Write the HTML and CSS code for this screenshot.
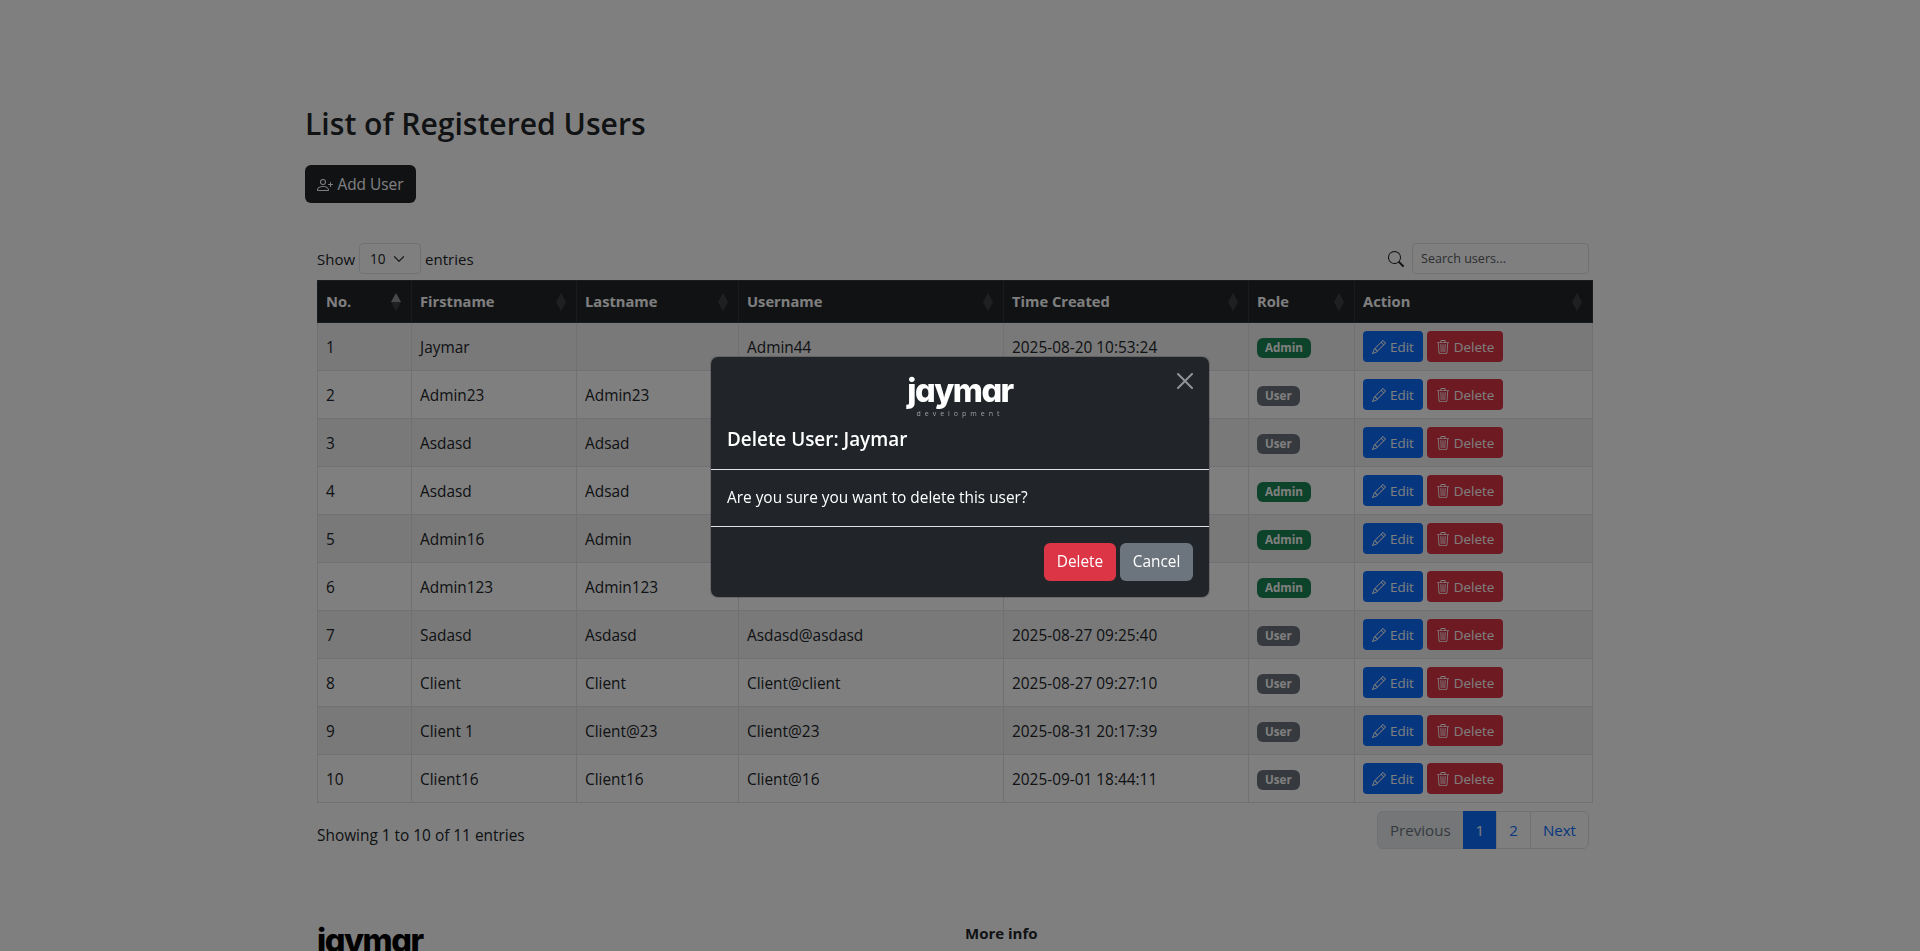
FILE: index.html
```html
<!DOCTYPE html>
<html lang="en">
<head>
    <meta charset="UTF-8">
    <meta name="viewport" content="width=device-width, initial-scale=1.0">
    <title>Registered Users</title>
    <link rel="stylesheet" href="styles.css">
</head>
<body>
    <main class="container">
        <h1 class="page-title">List of Registered Users</h1>
        <button class="btn btn-dark add-btn">
            <svg class="icon" viewBox="0 0 16 16"><path d="M6 8a3 3 0 1 0 0-6 3 3 0 0 0 0 6zm2-3a2 2 0 1 1-4 0 2 2 0 0 1 4 0zm4 8c0 1-1 1-1 1H1s-1 0-1-1 1-4 6-4 6 3 6 4zm-1-.004c-.001-.246-.154-.986-.832-1.664C9.516 10.68 8.289 10 6 10c-2.29 0-3.516.68-4.168 1.332-.678.678-.83 1.418-.832 1.664h10z"/><path d="M13.5 5a.5.5 0 0 1 .5.5V7h1.5a.5.5 0 0 1 0 1H14v1.5a.5.5 0 0 1-1 0V8h-1.5a.5.5 0 0 1 0-1H13V5.5a.5.5 0 0 1 .5-.5z"/></svg>
            Add User
        </button>

        <section class="table-wrap">
            <div class="table-top">
                <label class="length">Show
                    <span class="select">10
                        <svg viewBox="0 0 16 16"><path fill="none" stroke="#343a40" stroke-linecap="round" stroke-linejoin="round" stroke-width="1.6" d="m2 5 6 6 6-6"/></svg>
                    </span>
                    entries</label>
                <div class="search">
                    <svg class="search-icon" viewBox="0 0 16 16"><path d="M11.742 10.344a6.5 6.5 0 1 0-1.397 1.398h-.001c.03.04.062.078.098.115l3.85 3.85a1 1 0 0 0 1.415-1.414l-3.85-3.85a1.007 1.007 0 0 0-.115-.1zM12 6.5a5.5 5.5 0 1 1-11 0 5.5 5.5 0 0 1 11 0z"/></svg>
                    <span class="search-input">Search users...</span>
                </div>
            </div>

            <table class="users">
                <colgroup>
                    <col class="c-no"><col class="c-first"><col class="c-last"><col class="c-user"><col class="c-time"><col class="c-role"><col class="c-action">
                </colgroup>
                <thead>
                    <tr>
                        <th class="sorted">No.</th>
                        <th>Firstname</th>
                        <th>Lastname</th>
                        <th>Username</th>
                        <th>Time Created</th>
                        <th>Role</th>
                        <th>Action</th>
                    </tr>
                </thead>
                <tbody id="rows"></tbody>
            </table>

            <div class="table-bottom">
                <div class="info">Showing 1 to 10 of 11 entries</div>
                <ul class="pager">
                    <li class="disabled">Previous</li>
                    <li class="active">1</li>
                    <li>2</li>
                    <li>Next</li>
                </ul>
            </div>
        </section>

        <footer class="site-footer">
            <div class="footer-brand">jaymar</div>
            <h6 class="footer-head">More info</h6>
        </footer>
    </main>

    <div class="backdrop"></div>

    <div class="modal">
        <div class="modal-content">
            <div class="modal-header">
                <div class="logo">
                    <span class="logo-word">jaymar</span>
                    <span class="logo-sub">development</span>
                </div>
                <h5 class="modal-title">Delete User: Jaymar</h5>
                <svg class="close" viewBox="0 0 16 16"><path d="M.293.293a1 1 0 0 1 1.414 0L8 6.586 14.293.293a1 1 0 1 1 1.414 1.414L9.414 8l6.293 6.293a1 1 0 0 1-1.414 1.414L8 9.414l-6.293 6.293a1 1 0 0 1-1.414-1.414L6.586 8 .293 1.707a1 1 0 0 1 0-1.414z"/></svg>
            </div>
            <div class="modal-body">Are you sure you want to delete this user?</div>
            <div class="modal-footer">
                <button class="btn btn-danger">Delete</button>
                <button class="btn btn-secondary">Cancel</button>
            </div>
        </div>
    </div>

    <script src="app.js"></script>
</body>
</html>
```

FILE: styles.css
```css
* {
    box-sizing: border-box;
}

html, body {
    height: 100%;
}

body {
    margin: 0;
    background: #fff;
    color: #212529;
    font-family: 'Open Sans', 'Noto Sans', sans-serif;
    font-size: 15.4px;
    line-height: 24px;
    overflow: hidden;
}

.container {
    width: 1300px;
    margin-left: 305px;
    padding-top: 103px;
}

.page-title {
    margin: 0 0 20px;
    font-size: 30.1px;
    font-weight: 600;
    line-height: 42px;
}

.btn {
    display: inline-flex;
    align-items: center;
    justify-content: center;
    height: 38px;
    padding: 0 12px;
    border: 1px solid transparent;
    border-radius: 6px;
    color: #fff;
    font: inherit;
    white-space: nowrap;
}

.btn-dark { background: #212529; }
.btn-danger { background: #dc3545; }
.btn-secondary { background: #6c757d; }

.icon {
    width: 16px;
    height: 16px;
    margin-right: 4px;
    fill: currentColor;
}

.add-btn {
    display: flex;
    width: 111px;
    padding: 2px 0 0;
}

.table-wrap {
    width: 1272px;
    margin: 40px 0 0 12px;
}

.table-top {
    display: flex;
    justify-content: space-between;
    align-items: center;
    height: 31px;
    margin-bottom: 6px;
    font-size: 15px;
}

.length {
    display: flex;
    align-items: center;
    gap: 4px;
}

.select {
    display: flex;
    align-items: center;
    justify-content: space-between;
    width: 62px;
    height: 31px;
    padding: 0 15px 0 10px;
    border: 1px solid #dee2e6;
    border-radius: 4px;
    font-size: 13.6px;
}

.select svg {
    width: 12px;
    height: 12px;
}

.search {
    display: flex;
    align-items: center;
    gap: 8px;
}

.search-icon {
    width: 16px;
    height: 16px;
    fill: #212529;
}

.search-input {
    display: flex;
    align-items: center;
    width: 177px;
    height: 31px;
    padding: 0 8px;
    border: 1px solid #dee2e6;
    border-radius: 4px;
    color: #595c5f;
    font-size: 12.6px;
}

.users {
    width: 1275px;
    table-layout: fixed;
    border-collapse: collapse;
}

.c-no { width: 94px; }
.c-first { width: 165px; }
.c-last { width: 162px; }
.c-user { width: 265px; }
.c-time { width: 245px; }
.c-role { width: 106px; }
.c-action { width: 238px; }

.users th {
    position: relative;
    height: 42px;
    padding: 0 8px 1px;
    background: #212529;
    border: 1px solid #32383e;
    color: #fff;
    font-size: 14.7px;
    font-weight: 700;
    text-align: left;
}

/* sort arrows */
.users th::before,
.users th::after {
    content: "";
    position: absolute;
    right: 10px;
    width: 0;
    height: 0;
    border-left: 5.5px solid transparent;
    border-right: 5.5px solid transparent;
    opacity: 0.13;
}

.users th::before {
    top: 12px;
    border-bottom: 9px solid #fff;
}

.users th::after {
    top: 21px;
    border-top: 9px solid #fff;
}

.users th.sorted::before {
    opacity: 0.5;
}

.users td {
    height: 48px;
    padding: 2px 8px 0;
    border: 1px solid #dee2e6;
    vertical-align: middle;
}

.users tbody tr:nth-child(odd) td {
    background: #f2f2f2;
}

.badge {
    display: inline-block;
    padding: 0 8px;
    border-radius: 6px;
    color: #fff;
    font-size: 11.6px;
    font-weight: 700;
    line-height: 20px;
    vertical-align: middle;
}

.badge-admin { background: #198754; }
.badge-user { background: #6c757d; }

.actions {
    display: flex;
    gap: 4px;
    margin-top: -2px;
}

.btn-sm {
    height: 31px;
    padding: 0 8px;
    border-radius: 4px;
    font-size: 13.4px;
}

.btn-sm svg {
    width: 14px;
    height: 14px;
    margin-right: 4px;
    fill: currentColor;
}

.btn-edit { background: #0d6efd; }
.btn-delete { background: #dc3545; }

.table-bottom {
    display: flex;
    justify-content: space-between;
    height: 38px;
    margin-top: 8px;
}

.info {
    padding-top: 13px;
}

.pager {
    display: flex;
    margin: 0;
    padding: 0;
    list-style: none;
    font-size: 15.1px;
}

.pager li {
    display: flex;
    align-items: center;
    height: 38px;
    padding: 0 12px;
    margin-left: -1px;
    border: 1px solid #dee2e6;
    background: #fff;
    color: #0d6efd;
}

.pager li:first-child {
    border-radius: 6px 0 0 6px;
}

.pager li:last-child {
    border-radius: 0 6px 6px 0;
}

.pager .disabled {
    background: #e9ecef;
    color: #6c757d;
}

.pager .active {
    border-color: #0d6efd;
    background: #0d6efd;
    color: #fff;
}

.site-footer {
    display: flex;
    margin: 72px 0 0 12px;
}

.footer-brand {
    width: 648px;
    color: #000;
    font-family: Inter, sans-serif;
    font-size: 32.5px;
    font-weight: 800;
    font-feature-settings: "cv11";
    letter-spacing: -1.5px;
    line-height: 40px;
}

.footer-head {
    margin: 0;
    font-size: 15px;
    font-weight: 700;
}

.backdrop {
    position: fixed;
    inset: 0;
    background: rgba(0, 0, 0, 0.5);
}

.modal {
    position: fixed;
    inset: 0;
    display: flex;
    align-items: center;
    justify-content: center;
    padding-top: 2px;
}

.modal-content {
    width: 500px;
    border: 1px solid rgba(0, 0, 0, 0.175);
    border-radius: 8px;
    background: #212529;
    background-clip: padding-box;
    color: #fff;
}

.modal-header {
    position: relative;
    height: 113px;
    padding: 16px;
    border-bottom: 1px solid #dee2e6;
}

.logo {
    display: flex;
    flex-direction: column;
    align-items: center;
    height: 53px;
}

.logo-word {
    font-family: Inter, sans-serif;
    font-size: 32.5px;
    font-weight: 800;
    font-feature-settings: "cv11";
    letter-spacing: -1.5px;
    line-height: 36px;
}

.logo-sub {
    margin-top: 1px;
    color: #a0a2a4;
    font-size: 7px;
    letter-spacing: 4px;
    line-height: 8px;
}

.modal-title {
    margin: 0;
    font-size: 18.9px;
    font-weight: 600;
    line-height: 26px;
}

.close {
    position: absolute;
    top: 16px;
    right: 16px;
    width: 16px;
    height: 16px;
    fill: #fff;
    opacity: 0.5;
}

.modal-body {
    padding: 16px;
    border-bottom: 1px solid #dee2e6;
}

.modal-footer {
    display: flex;
    justify-content: flex-end;
    gap: 4px;
    padding: 16px;
}

.modal-footer .btn {
    width: 72px;
    padding: 0;
}

.modal-footer .btn-secondary {
    width: 73px;
}
```

FILE: app.js
```js
// username/time for rows 2-6 sit behind the dialog
const users = [
    ['Jaymar', '', 'Admin44', '2025-08-20 10:53:24', 'Admin'],
    ['Admin23', 'Admin23', '', '', 'User'],
    ['Asdasd', 'Adsad', '', '', 'User'],
    ['Asdasd', 'Adsad', '', '', 'Admin'],
    ['Admin16', 'Admin', '', '', 'Admin'],
    ['Admin123', 'Admin123', '', '', 'Admin'],
    ['Sadasd', 'Asdasd', 'Asdasd@asdasd', '2025-08-27 09:25:40', 'User'],
    ['Client', 'Client', 'Client@client', '2025-08-27 09:27:10', 'User'],
    ['Client 1', 'Client@23', 'Client@23', '2025-08-31 20:17:39', 'User'],
    ['Client16', 'Client16', 'Client@16', '2025-09-01 18:44:11', 'User']
];

const pencil = '<svg viewBox="0 0 16 16"><path d="M12.146.146a.5.5 0 0 1 .708 0l3 3a.5.5 0 0 1 0 .708l-10 10a.5.5 0 0 1-.168.11l-5 2a.5.5 0 0 1-.65-.65l2-5a.5.5 0 0 1 .11-.168l10-10zM11.207 2.5 13.5 4.793 14.793 3.5 12.5 1.207 11.207 2.5zm1.586 3L10.5 3.207 4 9.707V10h.5a.5.5 0 0 1 .5.5v.5h.5a.5.5 0 0 1 .5.5v.5h.293l6.5-6.5zm-9.761 5.175-.106.106-1.528 3.821 3.821-1.528.106-.106A.5.5 0 0 1 5 12.5V12h-.5a.5.5 0 0 1-.5-.5V11h-.5a.5.5 0 0 1-.468-.325z"/></svg>';
const trash = '<svg viewBox="0 0 16 16"><path d="M6.5 1h3a.5.5 0 0 1 .5.5v1H6v-1a.5.5 0 0 1 .5-.5ZM11 2.5v-1A1.5 1.5 0 0 0 9.5 0h-3A1.5 1.5 0 0 0 5 1.5v1H2.506a.58.58 0 0 0-.01 0H1.5a.5.5 0 0 0 0 1h.538l.853 10.66A2 2 0 0 0 4.885 16h6.23a2 2 0 0 0 1.994-1.84l.853-10.66h.538a.5.5 0 0 0 0-1h-.995a.59.59 0 0 0-.01 0H11Zm1.958 1-.846 10.58a1 1 0 0 1-.997.92h-6.23a1 1 0 0 1-.997-.92L3.042 3.5h9.916Zm-7.487 1a.5.5 0 0 1 .528.47l.5 8.5a.5.5 0 0 1-.998.06L5 5.03a.5.5 0 0 1 .47-.53Zm5.058 0a.5.5 0 0 1 .47.53l-.5 8.5a.5.5 0 1 1-.998-.06l.5-8.5a.5.5 0 0 1 .528-.47ZM8 4.5a.5.5 0 0 1 .5.5v8.5a.5.5 0 0 1-1 0V5a.5.5 0 0 1 .5-.5Z"/></svg>';

document.getElementById('rows').innerHTML = users.map((u, i) => `
    <tr>
        <td>${i + 1}</td>
        <td>${u[0]}</td>
        <td>${u[1]}</td>
        <td>${u[2]}</td>
        <td>${u[3]}</td>
        <td><span class="badge badge-${u[4].toLowerCase()}">${u[4]}</span></td>
        <td><div class="actions">
            <button class="btn btn-sm btn-edit">${pencil}Edit</button>
            <button class="btn btn-sm btn-delete">${trash}Delete</button>
        </div></td>
    </tr>`).join('');
```
